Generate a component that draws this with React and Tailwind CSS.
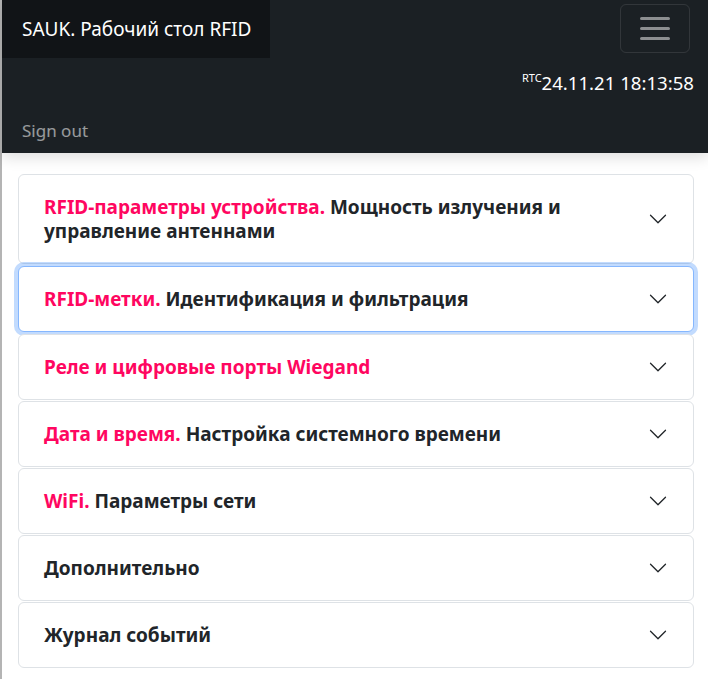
import React from "react";

const sections = [
	{ accent: "RFID-параметры устройства.", rest: " Мощность излучения и управление антеннами" },
	{ accent: "RFID-метки.", rest: " Идентификация и фильтрация", focused: true },
	{ accent: "Реле и цифровые порты Wiegand", rest: "" },
	{ accent: "Дата и время.", rest: " Настройка системного времени" },
	{ accent: "WiFi.", rest: " Параметры сети" },
	{ accent: "", rest: "Дополнительно" },
	{ accent: "", rest: "Журнал событий" },
];

const Chevron = () => (
	<svg className="w-5 h-5 shrink-0" viewBox="0 0 16 16" fill="#212529">
		<path
			fillRule="evenodd"
			d="M1.646 4.646a.5.5 0 0 1 .708 0L8 10.293l5.646-5.647a.5.5 0 0 1 .708.708l-6 6a.5.5 0 0 1-.708 0l-6-6a.5.5 0 0 1 0-.708z"
		/>
	</svg>
);

const Navbar = () => {
	return (
		<nav className="relative z-10 bg-[#1b2024] shadow-[0_4px_14px_rgba(0,0,0,0.14)]">
			<div className="flex justify-between h-[58px]">
				<a className="flex items-center bg-[#111417] w-[268px] pl-5 text-white text-[19px]">
					SAUK. Рабочий стол RFID
				</a>
				<button className="mt-1 mr-[18px] w-[70px] h-[49px] rounded-md border border-white/10 flex flex-col items-center justify-center gap-[7px]">
					<span className="block w-[30px] h-[3px] bg-[#8c8e90] rounded-sm" />
					<span className="block w-[30px] h-[3px] bg-[#8c8e90] rounded-sm" />
					<span className="block w-[30px] h-[3px] bg-[#8c8e90] rounded-sm" />
				</button>
			</div>
			<div className="h-[50px] flex items-center justify-end pr-[14px] text-white">
				<span className="text-[11px] self-start mt-[12px]">RTC</span>
				<span className="text-[18.6px]">24.11.21 18:13:58</span>
			</div>
			<div className="h-[45px] flex items-center pl-5">
				<a className="text-[17px] text-white/55">Sign out</a>
			</div>
		</nav>
	);
};

const App = () => {
	return (
		<div
			className="min-h-[679px] bg-white border-l-2 border-[#b4b4b4]"
			style={{ fontFamily: '"Noto Sans", "Open Sans", sans-serif' }}
		>
			<Navbar />
			<main className="pl-4 pr-[14px] pt-[21px] flex flex-col gap-[1px]">
				{sections.map((s, i) => (
					<button
						key={i}
						className={
							s.focused
								? "flex items-center text-left bg-white rounded-md border border-[#86b7fe] shadow-[0_0_0_4px_rgba(13,110,253,0.25)] px-[25px] py-5 my-[1px]"
								: "flex items-center text-left bg-white rounded-md border border-[#dee2e6] px-[25px] py-5"
						}
					>
						<span className="flex-1 pr-[20px] text-[19px] leading-6 font-bold text-[#212529]">
							{s.accent && <span className="text-[#ff0660]">{s.accent}</span>}
							{s.rest}
						</span>
						<Chevron />
					</button>
				))}
			</main>
		</div>
	);
};

export default App;
